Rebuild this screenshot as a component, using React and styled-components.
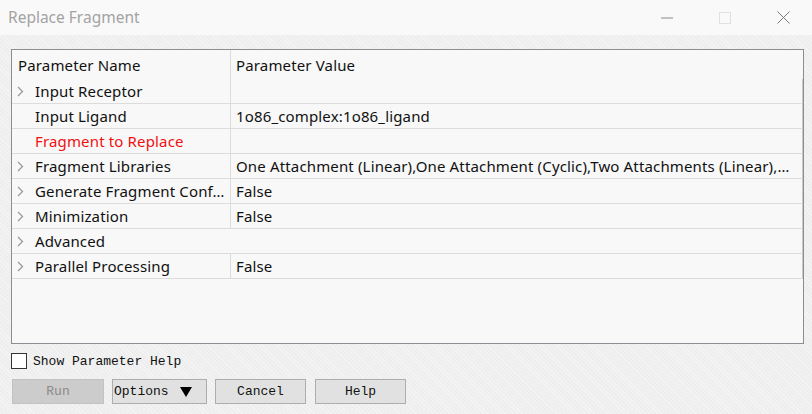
import React, { useState } from 'react';
import styled, { createGlobalStyle } from 'styled-components';

const GlobalStyle = createGlobalStyle`
    html, body
    {
        margin: 0;
        padding: 0;
        width: 812px;
        height: 414px;
        overflow: hidden;
    }
`;

const rows = [
    { name: `Input Receptor`, value: ``, expand: true },
    { name: `Input Ligand`, value: `1o86_complex:1o86_ligand` },
    { name: `Fragment to Replace`, value: ``, required: true },
    { name: `Fragment Libraries`, value: `One Attachment (Linear),One Attachment (Cyclic),Two Attachments (Linear),…`, expand: true },
    { name: `Generate Fragment Conf…`, value: `False`, expand: true },
    { name: `Minimization`, value: `False`, expand: true },
    { name: `Advanced`, expand: true, group: true },
    { name: `Parallel Processing`, value: `False`, expand: true },
];

const Window = styled.div`
    width: 812px;
    height: 414px;
    display: flex;
    flex-direction: column;
    background-color: #eeeeee;
    background-image: repeating-linear-gradient(45deg, rgba(255,255,255,0.35) 0 1px, transparent 1px 3px);
    font-family: "Noto Sans", "Open Sans", sans-serif;
`;

const TitleBar = styled.div`
    height: 35px;
    flex-shrink: 0;
    display: flex;
    align-items: center;
    background: #f9f9f9;
    padding-left: 8px;
`;

const Title = styled.div`
    flex: 1;
    font-size: 15.5px;
    color: #a3a3a3;
    margin-top: -1px;
`;

const WinButton = styled.div`
    width: 58px;
    height: 35px;
    display: flex;
    align-items: center;
    justify-content: center;
`;

const Body = styled.div`
    flex: 1;
    display: flex;
    flex-direction: column;
    padding: 14px 8px 0 11px;
`;

const Table = styled.div`
    height: 295px;
    box-sizing: border-box;
    border: 1px solid #8c8c92;
    background: #f8f8f8;
    display: flex;
    flex-direction: column;
    font-size: 15px;
    letter-spacing: 0.15px;
    color: #111;
`;

const HeaderRow = styled.div`
    display: grid;
    grid-template-columns: 219px 1fr;
    height: 29px;
`;

const HeaderCell = styled.div`
    display: flex;
    align-items: center;
    padding-left: ${p => p.$first ? 6 : 5}px;
    border-right: ${p => p.$first ? `1px solid #dcdcdc` : `none`};
`;

const Row = styled.div`
    display: grid;
    grid-template-columns: ${p => p.$group ? `1fr` : `219px 1fr`};
    height: 24px;
    border-bottom: 1px solid #dcdcdc;
    border-right: 1px solid #c8c8c8;
`;

const NameCell = styled.div`
    display: flex;
    align-items: center;
    border-right: ${p => p.$group ? `none` : `1px solid #dcdcdc`};
    color: ${p => p.$required ? `#f01010` : `#111`};
    white-space: nowrap;
    overflow: hidden;
`;

const Arrow = styled.span`
    width: 18px;
    padding-left: 5px;
    display: flex;
    flex-shrink: 0;
`;

const ValueCell = styled.div`
    display: flex;
    align-items: center;
    padding-left: 5px;
    white-space: nowrap;
    overflow: hidden;
`;

const CheckRow = styled.label`
    display: flex;
    align-items: center;
    gap: 6px;
    margin-top: 9px;
    height: 16px;
    font-family: "Liberation Mono", monospace;
    font-size: 13px;
    color: #111;
`;

const Box = styled.span`
    width: 14px;
    height: 14px;
    border: 1px solid #333;
    background: #fff;
    display: inline-block;
`;

const Buttons = styled.div`
    display: flex;
    gap: 8px;
    margin-top: 10px;
    padding-left: 1px;
`;

const Button = styled.div`
    width: ${p => p.$w}px;
    height: 25px;
    box-sizing: border-box;
    margin-left: ${p => p.$shift || 0}px;
    border: 1px solid ${p => p.$disabled ? `#c2c2c2` : `#adadad`};
    background: ${p => p.$disabled ? `#cccccc` : `#e1e1e1`};
    color: ${p => p.$disabled ? `#8a8a8a` : `#111`};
    font-family: "Liberation Mono", monospace;
    font-size: 13px;
    display: flex;
    align-items: center;
    justify-content: ${p => p.$left ? `flex-start` : `center`};
    padding-left: ${p => p.$left ? 1 : 0}px;
    gap: 11px;
`;

const Chevron = () => (
    <svg width="7" height="11" viewBox="0 0 7 11">
        <polyline points="1,1 5.5,5.5 1,10" fill="none" stroke="#9a9a9a" strokeWidth="1.3" />
    </svg>
);

const DownTriangle = () => (
    <svg width="12" height="10" viewBox="0 0 12 10">
        <polygon points="0,0 12,0 6,10" fill="#000" />
    </svg>
);

const App = () =>
{
    const [ checked, setChecked ] = useState( false );
    return (
        <Window>
            <GlobalStyle />
            <TitleBar>
                <Title>Replace Fragment</Title>
                <WinButton>
                    <svg width="12" height="2" viewBox="0 0 12 2"><line x1="0" y1="1" x2="12" y2="1" stroke="#8a8a8a" /></svg>
                </WinButton>
                <WinButton>
                    <svg width="12" height="12" viewBox="0 0 12 12"><rect x="0.5" y="0.5" width="11" height="11" fill="none" stroke="#e0e0e0" /></svg>
                </WinButton>
                <WinButton>
                    <svg width="13" height="13" viewBox="0 0 13 13"><path d="M0.5 0.5 L12.5 12.5 M12.5 0.5 L0.5 12.5" stroke="#7a7a7a" strokeWidth="1" /></svg>
                </WinButton>
            </TitleBar>
            <Body>
                <Table>
                    <HeaderRow>
                        <HeaderCell $first>Parameter Name</HeaderCell>
                        <HeaderCell>Parameter Value</HeaderCell>
                    </HeaderRow>
                    {rows.map(row => (
                        <Row key={row.name} $group={row.group}>
                            <NameCell $group={row.group} $required={row.required}>
                                <Arrow>{row.expand && <Chevron />}</Arrow>
                                {row.name}
                            </NameCell>
                            {!row.group && <ValueCell>{row.value}</ValueCell>}
                        </Row>
                    ))}
                </Table>
                <CheckRow onClick={() => setChecked(!checked)}>
                    <Box />
                    Show Parameter Help
                </CheckRow>
                <Buttons>
                    <Button $w={92} $disabled>Run</Button>
                    <Button $w={95} $left>Options <DownTriangle /></Button>
                    <Button $w={91}>Cancel</Button>
                    <Button $w={91} $shift={1}>Help</Button>
                </Buttons>
            </Body>
        </Window>
    );
};

export default App;
